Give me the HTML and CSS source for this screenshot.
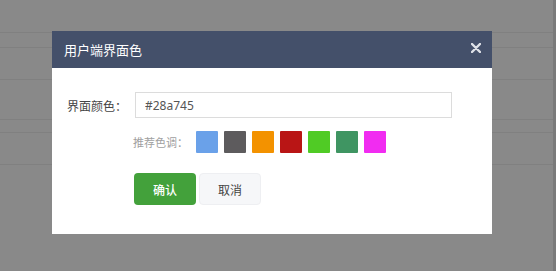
FILE: index.html
```html
<!DOCTYPE html>
<html lang="zh">
	<head>
		<meta charset="UTF-8" />
		<title>用户端界面色</title>
		<link rel="stylesheet" href="styles.css">
	</head>
	<body>
		<div class="page">
			<div class="bg-row" style="height: 33px"></div>
			<div class="bg-row" style="height: 15px"></div>
			<div class="bg-row" style="height: 32px"></div>
			<div class="bg-row" style="height: 40px"></div>
			<div class="bg-row" style="height: 13px"></div>
			<div class="bg-row" style="height: 32px"></div>
		</div>

		<div class="modal">
			<div class="modal-header">
				<span class="modal-title">用户端界面色</span>
				<svg class="modal-close" width="10" height="10" viewBox="0 0 10 10">
					<path d="M1 1 L9 9 M9 1 L1 9" stroke="#dfe2e8" stroke-width="2.4" stroke-linecap="round" />
				</svg>
			</div>
			<div class="modal-body">
				<div class="form-row">
					<label class="form-label">界面颜色：</label>
					<input class="form-input" type="text" value="#28a745" />
				</div>
				<div class="form-row swatch-row">
					<span class="swatch-label">推荐色调：</span>
					<div class="swatches">
						<span class="swatch" style="background: #6aa1e9"></span>
						<span class="swatch" style="background: #5d5b5d"></span>
						<span class="swatch" style="background: #f39200"></span>
						<span class="swatch" style="background: #b91515"></span>
						<span class="swatch" style="background: #50cb25"></span>
						<span class="swatch" style="background: #3f9562"></span>
						<span class="swatch" style="background: #f12cf1"></span>
					</div>
				</div>
				<div class="form-row button-row">
					<button class="btn btn-ok">确认</button>
					<button class="btn btn-cancel">取消</button>
				</div>
			</div>
		</div>
	</body>
</html>
```

FILE: styles.css
```css
body {
	margin: 0;
	height: 271px;
	overflow: hidden;
	background-color: #898989;
	font-family: "Noto Sans CJK SC", "Noto Sans", sans-serif;
}
.page {
	width: 553px;
	height: 271px;
	border-right: 3px solid #7a7a7a;
}
.bg-row {
	box-sizing: border-box;
	border-bottom: 1px solid #808080;
}
.modal {
	position: absolute;
	left: 52px;
	top: 31px;
	width: 440px;
	height: 203px;
	background-color: #fff;
}
.modal-header {
	display: flex;
	align-items: center;
	justify-content: space-between;
	height: 37px;
	padding: 0 11px 0 12px;
	background-color: #44506a;
}
.modal-title {
	color: #fff;
	font-size: 13px;
}
.modal-close {
	margin-top: -4px;
}
.modal-body {
	padding: 24px 40px 0 15px;
}
.form-row {
	display: flex;
	align-items: center;
}
.form-label {
	width: 68px;
	flex-shrink: 0;
	font-size: 12px;
	color: #444;
}
.form-input {
	flex: 1;
	height: 26px;
	box-sizing: border-box;
	border: 1px solid #dcdcdc;
	padding: 0 9px;
	font-family: "Noto Sans", sans-serif;
	font-size: 12px;
	color: #555;
	outline: none;
}
.swatch-row {
	margin-top: 13px;
	padding-left: 66px;
}
.swatch-label {
	width: 63px;
	font-size: 11px;
	color: #a0a0a0;
}
.swatches {
	display: flex;
	gap: 6px;
}
.swatch {
	width: 22px;
	height: 22px;
	border-radius: 1px;
}
.button-row {
	margin-top: 20px;
	padding-left: 67px;
	gap: 3px;
}
.btn {
	width: 62px;
	height: 32px;
	border-radius: 4px;
	font-family: "Noto Sans CJK SC", sans-serif;
	font-size: 12px;
	cursor: pointer;
}
.btn-ok {
	border: none;
	background-color: #43a13b;
	color: #fff;
	font-weight: 500;
}
.btn-cancel {
	border: 1px solid #eeeff2;
	background-color: #f6f7f9;
	color: #444;
}
```
